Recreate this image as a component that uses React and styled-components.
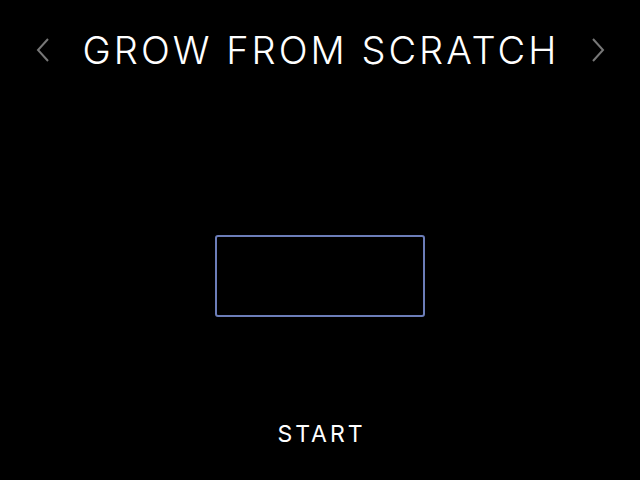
import React from "react";
import styled, { createGlobalStyle } from "styled-components";

const Global = createGlobalStyle`
  html, body { margin: 0; padding: 0; background: #000; }
  body { font-family: Inter, "Noto Sans", sans-serif; color: #fff; }
`;

export default function App() {
  return (
    <>
      <Global />
      <Screen>
        <Header>
          <Arrow aria-label="previous">
            <svg width="16" height="26" viewBox="0 0 16 26">
              <path d="M13 2 L3 13 L13 24" fill="none" stroke="#777" strokeWidth="2" />
            </svg>
          </Arrow>
          <Title>GROW FROM SCRATCH</Title>
          <Arrow aria-label="next">
            <svg width="16" height="26" viewBox="0 0 16 26">
              <path d="M3 2 L13 13 L3 24" fill="none" stroke="#777" strokeWidth="2" />
            </svg>
          </Arrow>
        </Header>
        <Body>
          <Field />
        </Body>
        <Footer>
          <StartButton>START</StartButton>
        </Footer>
      </Screen>
    </>
  );
}

const Screen = styled.div`
  width: 640px;
  height: 480px;
  display: flex;
  flex-direction: column;
  background: #000;
`;

const Header = styled.div`
  height: 100px;
  display: flex;
  align-items: center;
  justify-content: space-between;
  padding: 0 34px 0 35px;
  box-sizing: border-box;
`;

const Arrow = styled.button`
  background: transparent;
  border: 0;
  padding: 0;
  display: flex;
  cursor: pointer;
`;

const Title = styled.h1`
  margin: 0 0 0 1px;
  font-size: 38px;
  font-weight: 300;
  letter-spacing: 3px;
  color: #fff;
`;

const Body = styled.div`
  flex: 1;
  display: flex;
  align-items: center;
  justify-content: center;
  padding-top: 63px;
`;

const Field = styled.div`
  width: 210px;
  height: 82px;
  box-sizing: border-box;
  border: 2px solid #6c7db8;
  border-radius: 3px;
`;

const Footer = styled.div`
  height: 92px;
  display: flex;
  justify-content: center;
  align-items: center;
`;

const StartButton = styled.button`
  background: transparent;
  border: 0;
  padding: 0 0 0 3px;
  color: #fff;
  font-family: Inter, sans-serif;
  font-size: 23px;
  font-weight: 400;
  letter-spacing: 3px;
  cursor: pointer;
`;
